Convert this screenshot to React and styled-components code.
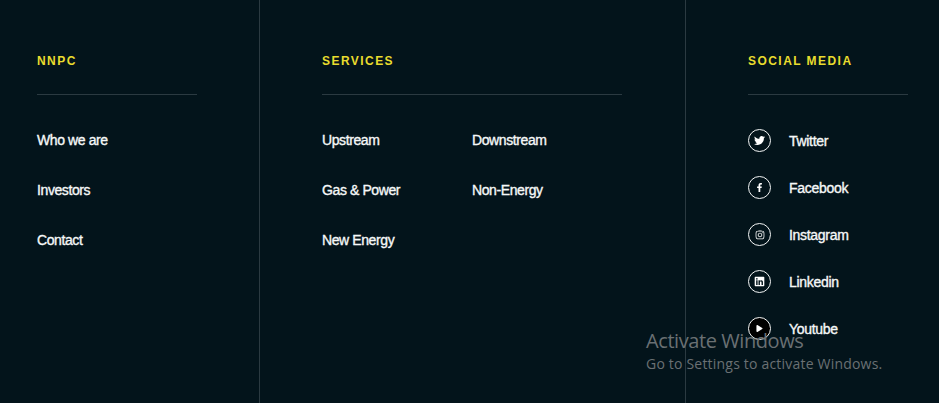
import styled, { createGlobalStyle } from 'styled-components';
import { FaTwitter, FaFacebookF, FaInstagram, FaLinkedin, FaPlay } from 'react-icons/fa';

const GlobalStyle = createGlobalStyle`
    html, body {
        margin: 0;
        padding: 0;
        background-color: #03141b;
    }
`

const Footer = styled.footer`
    position: relative;
    width: 939px;
    height: 403px;
    overflow: hidden;
    display: flex;
    background-color: #03141b;
    font-family: "Liberation Sans", Arial, sans-serif;
`

const Column = styled.section`
    box-sizing: border-box;
    width: ${props => props.$width}px;
    padding-top: 54px;
    padding-left: ${props => props.$inset}px;
    border-right: ${props => props.$divider ? '1px solid #2b3a41' : 'none'};
`

const Heading = styled.h4`
    box-sizing: border-box;
    width: ${props => props.$rule}px;
    height: 41px;
    margin: 0 0 20px;
    border-bottom: 1px solid #2b3a41;
    color: #e9dc2e;
    font-size: 12px;
    line-height: 14px;
    font-weight: 700;
    letter-spacing: 1.45px;
`

const LinkGrid = styled.div`
    display: grid;
    grid-template-columns: repeat(${props => props.$cols}, 150px);
    grid-auto-rows: 50px;
`

const LinkItem = styled.a`
    display: flex;
    align-items: center;
    height: 50px;
    color: #f6f8f8;
    font-size: 14px;
    font-weight: 400;
    letter-spacing: -0.4px;
    -webkit-text-stroke: 0.35px #f6f8f8;
`

const SocialList = styled.div`
    display: flex;
    flex-direction: column;
    gap: 24px;
    padding-top: 14px;
`

const SocialRow = styled.a`
    display: flex;
    align-items: center;
    gap: 18px;
    height: 23px;
    color: #f6f8f8;
    font-size: 14px;
    letter-spacing: -0.3px;
    -webkit-text-stroke: 0.35px #f6f8f8;
`

const IconRing = styled.span`
    box-sizing: border-box;
    width: 23px;
    height: 23px;
    flex: none;
    display: flex;
    align-items: center;
    justify-content: center;
    border: 1px solid #f4f6f6;
    border-radius: 50%;
    font-size: ${props => props.$size}px;
    color: #fff;
    -webkit-text-stroke: 0;
    background-color: ${props => props.$filled ? '#000' : 'transparent'};
`

const ActivateNotice = styled.div`
    position: absolute;
    left: 646px;
    top: 327px;
    color: #6a7073;
    font-family: "Open Sans", sans-serif;
    pointer-events: none;
`

const ActivateTitle = styled.div`
    font-size: 20px;
    line-height: 27px;
    letter-spacing: -0.42px;
`

const ActivateHint = styled.div`
    font-size: 14px;
    line-height: 20px;
    letter-spacing: 0.2px;
`

const socials = [
    { label: 'Twitter', Icon: FaTwitter, size: 11 },
    { label: 'Facebook', Icon: FaFacebookF, size: 9 },
    { label: 'Instagram', Icon: FaInstagram, size: 10 },
    { label: 'Linkedin', Icon: FaLinkedin, size: 11 },
    { label: 'Youtube', Icon: FaPlay, size: 7, filled: true },
];

export default function App() {
    return (
        <>
            <GlobalStyle />
            <Footer>
                <Column $width={260} $inset={37} $divider>
                    <Heading $rule={160}>NNPC</Heading>
                    <LinkGrid $cols={1}>
                        <LinkItem>Who we are</LinkItem>
                        <LinkItem>Investors</LinkItem>
                        <LinkItem>Contact</LinkItem>
                    </LinkGrid>
                </Column>

                <Column $width={426} $inset={62} $divider>
                    <Heading $rule={300}>SERVICES</Heading>
                    <LinkGrid $cols={2}>
                        <LinkItem>Upstream</LinkItem>
                        <LinkItem>Downstream</LinkItem>
                        <LinkItem>Gas &amp; Power</LinkItem>
                        <LinkItem>Non-Energy</LinkItem>
                        <LinkItem>New Energy</LinkItem>
                    </LinkGrid>
                </Column>

                <Column $width={253} $inset={62}>
                    <Heading $rule={160}>SOCIAL MEDIA</Heading>
                    <SocialList>
                        {socials.map(({ label, Icon, size, filled }) => (
                            <SocialRow key={label}>
                                <IconRing $size={size} $filled={filled}><Icon /></IconRing>
                                {label}
                            </SocialRow>
                        ))}
                    </SocialList>
                </Column>

                <ActivateNotice>
                    <ActivateTitle>Activate Windows</ActivateTitle>
                    <ActivateHint>Go to Settings to activate Windows.</ActivateHint>
                </ActivateNotice>
            </Footer>
        </>
    )
}
